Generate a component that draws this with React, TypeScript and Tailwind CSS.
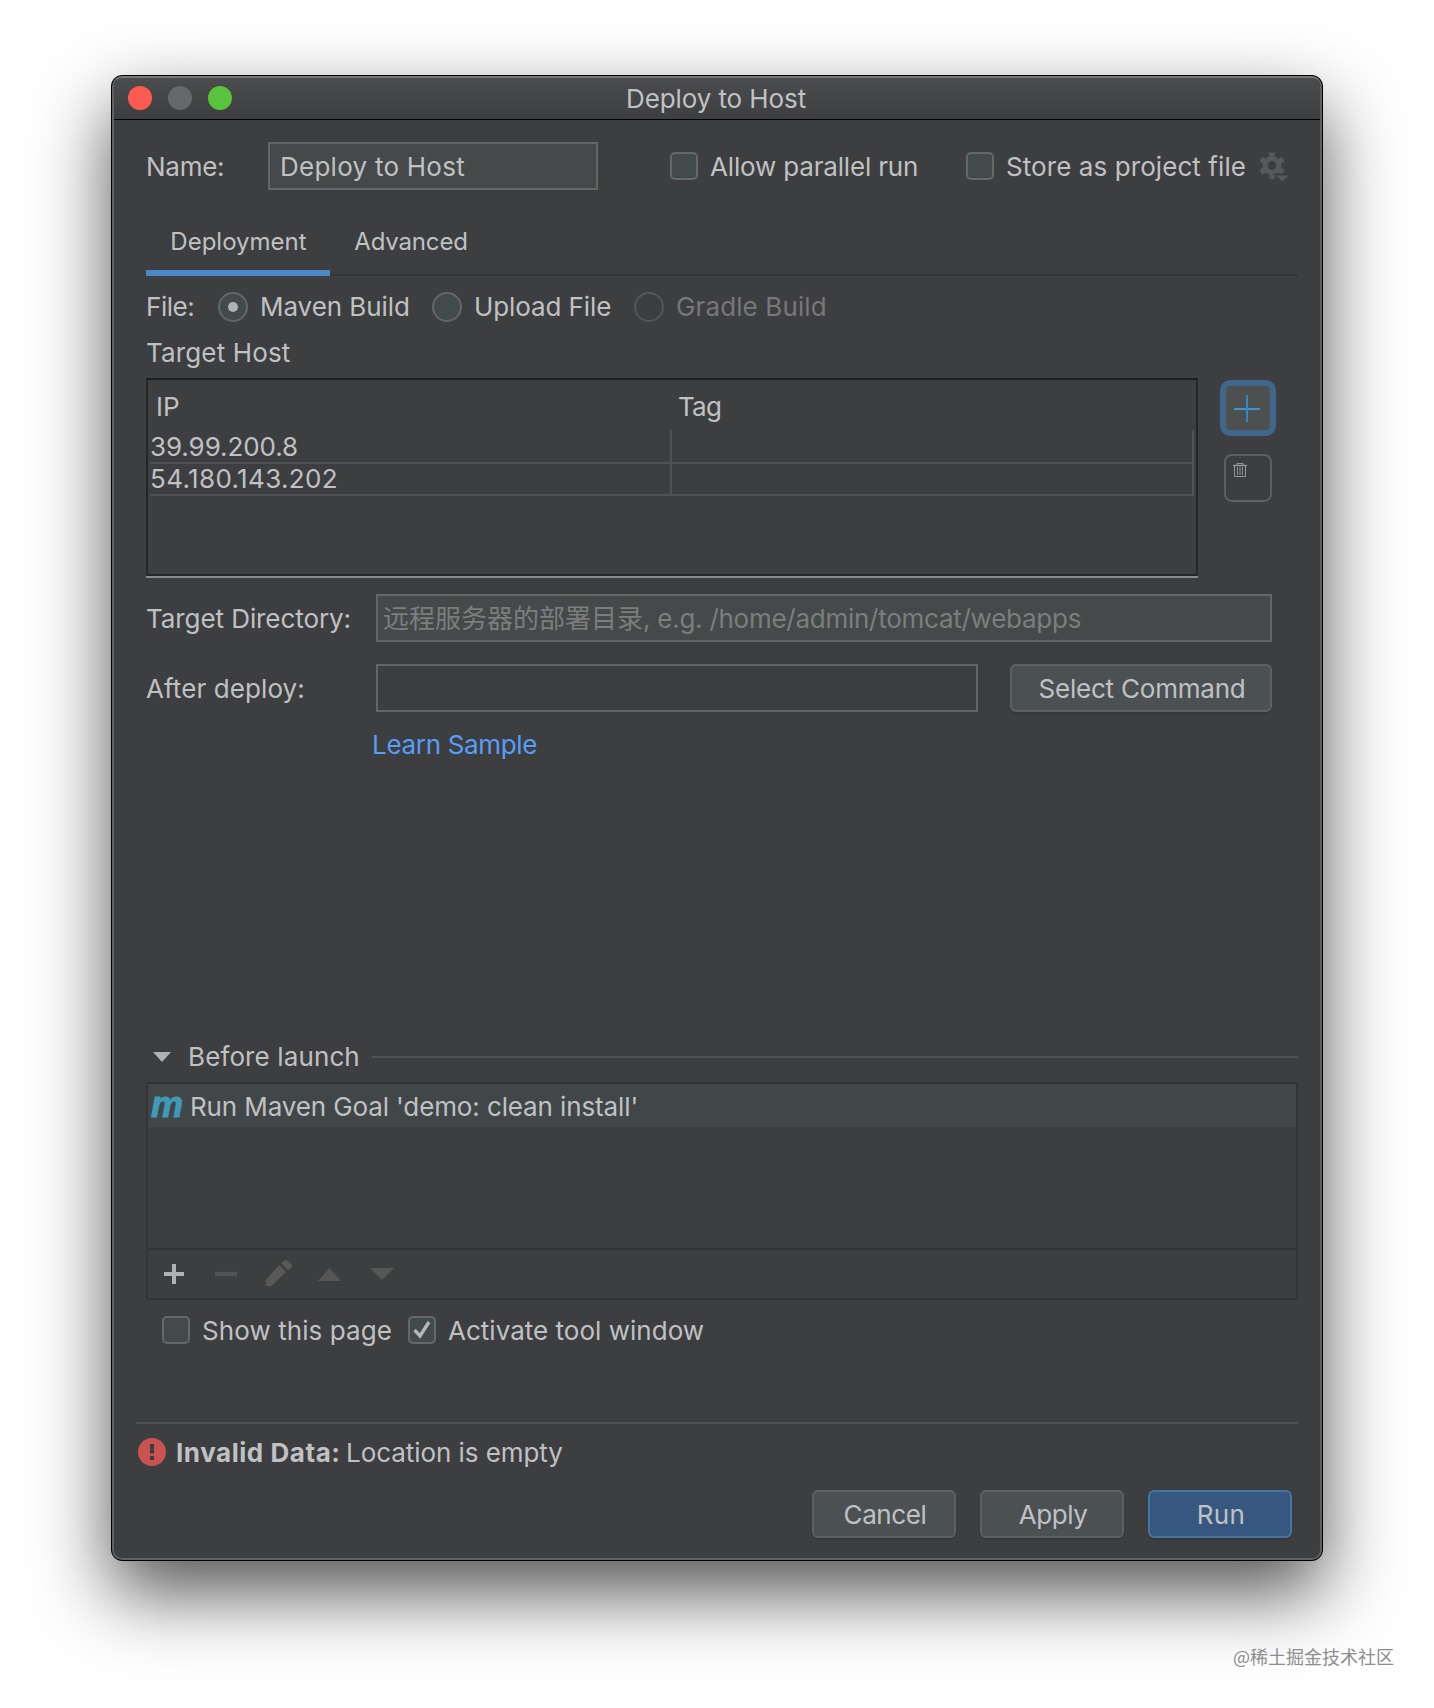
import React from 'react'
import clsx from 'clsx'
import { twMerge } from 'tailwind-merge'

interface TextProps {
  children: React.ReactNode
  className?: string
}

const Text: React.FC<TextProps> = ({ children, className }) => (
  <span className={twMerge('mt-px block whitespace-pre leading-[31px]', className)}>{children}</span>
)

const Checkbox: React.FC<{ checked?: boolean }> = ({ checked }) => (
  <div className="h-7 w-7 shrink-0 rounded-[5px] border-2 border-[#646868] bg-[#434a4b]">
    {checked && (
      <svg viewBox="0 0 24 24" className="h-6 w-6" fill="none">
        <path d="M4.5 12 L10 18 L19 4" stroke="#b4b6b7" strokeWidth="3.4" />
      </svg>
    )}
  </div>
)

const Radio: React.FC<{ selected?: boolean; disabled?: boolean }> = ({ selected, disabled }) => (
  <div
    className={clsx(
      'flex h-[30px] w-[30px] shrink-0 items-center justify-center rounded-full border-2',
      disabled ? 'border-[#535556]' : 'border-[#636767] bg-[#434a4b]'
    )}
  >
    {selected && <div className="h-2.5 w-2.5 rounded-full bg-[#b0b2b3]" />}
  </div>
)

interface ButtonProps {
  label: string
  className?: string
  textClassName?: string
  primary?: boolean
}

const Button: React.FC<ButtonProps> = ({ label, className, textClassName, primary }) => (
  <button
    className={clsx(
      'flex h-12 items-center justify-center rounded-md border-2 pl-0.5 shadow-[0_2px_2px_rgba(0,0,0,0.12)]',
      primary ? 'border-[#46759f] bg-[#365880]' : 'border-[#5d6162] bg-[#4b5152]',
      className
    )}
  >
    <Text className={textClassName}>{label}</Text>
  </button>
)

const GearIcon = () => (
  <svg width="30" height="32" viewBox="0 0 30 32" className="mt-px shrink-0">
    <g fill="#57595a">
      {[0, 60, 120, 180, 240, 300].map(angle => (
        <rect key={angle} x="9.2" y="1.6" width="5.6" height="8" transform={`rotate(${angle} 12 14.7)`} />
      ))}
      <circle cx="12" cy="14.7" r="9.4" />
    </g>
    <circle cx="12" cy="14.7" r="4.4" fill="#3d3e40" />
    <path d="M12.5 22.5 H30 L22 32 Z" fill="#3d3e40" />
    <path d="M16 24.6 H28.4 L22.2 30.6 Z" fill="#57595a" />
  </svg>
)

const TrashIcon = () => (
  <svg width="14" height="15" viewBox="0 0 14 15" fill="none" stroke="#97999a">
    <path d="M4 2 V0.5 H10 V2" />
    <path d="M0 2.5 H14" strokeWidth="1.4" />
    <path d="M1.5 3 V13.5 H12.5 V3" />
    <path d="M4.5 4 V12 M7 4 V12 M9.5 4 V12" strokeWidth="0.9" />
  </svg>
)

const hosts = [
  { ip: '39.99.200.8', tag: '', row: 'h-[34px]', text: 'tracking-[-0.08px]' },
  { ip: '54.180.143.202', tag: '', row: 'h-8', text: '-mt-px tracking-[0.35px]' }
]

const TitleBar = () => (
  <div className="flex h-[42px] items-start border-b border-black bg-linear-to-b from-[#4b4c4e] to-[#3d3e40]">
    <div className="mt-2 ml-3.5 flex w-[500px] gap-4">
      <div className="h-6 w-6 rounded-full bg-[#ff5b52]" />
      <div className="h-6 w-6 rounded-full bg-[#67686b]" />
      <div className="h-6 w-6 rounded-full bg-[#59c43c]" />
    </div>
    <Text className="mt-[5px] -ml-0.5 tracking-[-0.1px]">Deploy to Host</Text>
  </div>
)

const HostTable = () => (
  <div className="flex h-[200px] w-[1052px] flex-col border-b-2 border-[#8b8c8d]">
    <div className="flex-1 border-2 border-t-[#1d1e20] border-r-[#252628] border-b-[#252628] border-l-[#252628]">
      <div className="flex h-[50px] pt-2.5">
        <Text className="ml-2 w-[522px]">IP</Text>
        <Text className="tracking-[-0.8px]">Tag</Text>
      </div>
      <div className="mx-0.5">
        {hosts.map(host => (
          <div key={host.ip} className={clsx('flex border-b-2 border-[#515254]', host.row)}>
            <div className="w-[522px] border-r-2 border-[#515254]">
              <Text className={host.text}>{host.ip}</Text>
            </div>
            <div className="w-[522px] border-r-2 border-[#515254]">{host.tag}</div>
          </div>
        ))}
      </div>
    </div>
  </div>
)

const BeforeLaunch = () => (
  <>
    <div className="mt-[280px] flex h-8 items-center">
      <svg width="18" height="10" viewBox="0 0 18 10" className="mt-0.5 ml-[7px]">
        <path d="M0 0 H18 L9 10 Z" fill="#afb1b3" />
      </svg>
      <Text className="ml-[17px] w-[184px] tracking-[0.12px]">Before launch</Text>
      <div className="mt-0.5 h-0.5 flex-1 bg-[#515254]" />
    </div>
    <div className="mt-2.5 border-2 border-[#333436]">
      <div className="h-[164px]">
        <div className="flex h-[43px] items-start bg-[#414748]">
          <span className="ml-[3px] block w-[39px] font-['Liberation_Sans'] text-[36px] leading-[42px] font-bold text-[#3f9ab8] italic [-webkit-text-stroke:1px_#3f9ab8]">
            m
          </span>
          <Text className="mt-[7px] tracking-[-0.12px]">Run Maven Goal 'demo: clean install'</Text>
        </div>
      </div>
      <div className="flex h-[50px] items-center border-t-2 border-[#333436] pl-4">
        <svg width="20" height="20" viewBox="0 0 20 20">
          <path d="M10 0 V20 M0 10 H20" stroke="#afb1b3" strokeWidth="4" />
        </svg>
        <svg width="22" height="20" viewBox="0 0 22 20" className="ml-[31px]">
          <path d="M0 10 H22" stroke="#525354" strokeWidth="4.4" />
        </svg>
        <svg width="30" height="32" viewBox="0 0 30 32" className="ml-[27px]" fill="#585957">
          <path d="M1.7 21.7 L15.3 7 L22 13.7 L7.7 28 H1.7 Z" />
          <path d="M17.2 5.2 L20 2.6 Q21.8 1.2 23.6 2.6 L27.6 6.4 Q29 8 27.6 9.5 L24.2 12.2 Z" />
        </svg>
        <svg width="23" height="13" viewBox="0 0 23 13" className="ml-6">
          <path d="M0 13 L11.5 0 L23 13 Z" fill="#555655" />
        </svg>
        <svg width="24" height="12" viewBox="0 0 24 12" className="ml-[29px]">
          <path d="M0 0 H24 L12 12 Z" fill="#565757" />
        </svg>
      </div>
    </div>
    <div className="mt-4 ml-4 flex h-7 items-center">
      <Checkbox />
      <Text className="ml-3 w-[206px] tracking-[0.08px]">Show this page</Text>
      <Checkbox checked />
      <Text className="ml-3 tracking-[0.02px]">Activate tool window</Text>
    </div>
  </>
)

const App: React.FC = () => {
  return (
    <div className="h-[1708px] w-[1434px] overflow-hidden bg-white pt-[75px] font-[Inter,'Noto_Sans_CJK_SC',sans-serif] text-[26px] text-[#c0c1c2]">
      {/* Dialog window */}
      <div className="ml-[111px] h-[1486px] w-[1212px] rounded-[11px] border border-black bg-black shadow-[0_32px_76px_rgba(0,0,0,0.675)]">
        <div className="h-full overflow-hidden rounded-[10px] border-2 border-[#5e6061] border-t-[#777878] bg-[#3d3e40]">
          <TitleBar />

          <div className="pr-[22px] pl-8">
            {/* Name and run options */}
            <div className="mt-[22px] flex h-12 items-center">
              <Text className="w-[122px] tracking-[-0.25px]">Name:</Text>
              <div className="flex h-12 w-[330px] items-center border-2 border-[#646666] bg-[#45494a] pl-2.5">
                <Text className="tracking-[0.25px]">Deploy to Host</Text>
              </div>
              <div className="ml-[72px] flex w-[296px] items-center">
                <Checkbox />
                <Text className="ml-3 tracking-[-0.17px]">Allow parallel run</Text>
              </div>
              <Checkbox />
              <Text className="ml-3 w-[254px] tracking-[0.08px]">Store as project file</Text>
              <GearIcon />
            </div>

            {/* Tabs */}
            <div className="mt-5 flex h-[66px] border-b-2 border-[#343537] text-2xl">
              <div className="flex h-[66px] w-[184px] justify-center border-b-[6px] border-[#4a88c7] pt-4 pl-px">
                <Text className="leading-[29px]">Deployment</Text>
              </div>
              <div className="flex w-[162px] justify-center pt-4">
                <Text className="leading-[29px] tracking-[-0.16px]">Advanced</Text>
              </div>
            </div>

            {/* Source of the file */}
            <div className="mt-4 flex h-[30px] items-center">
              <Text className="-mt-px w-[72px] tracking-[-0.45px]">File:</Text>
              <Radio selected />
              <Text className="-mt-px ml-3 w-[172px] tracking-[-0.06px]">Maven Build</Text>
              <Radio />
              <Text className="-mt-px ml-3 w-40 tracking-[-0.1px]">Upload File</Text>
              <Radio disabled />
              <Text className="-mt-px ml-3 tracking-[0.12px] text-[#777879]">Gradle Build</Text>
            </div>

            <Text className="mt-[15px] tracking-[0.14px]">Target Host</Text>
            <div className="mt-2.5 flex h-[200px]">
              <HostTable />
              <div className="ml-[22px] flex w-14 flex-col items-center pt-0.5">
                <button className="flex h-14 w-14 items-center justify-center rounded-[10px] border-[6px] border-[#41668c] bg-[#4d504f]">
                  <svg width="28" height="28" viewBox="0 0 28 28" fill="none" strokeWidth="2">
                    <path d="M0 15 H26" stroke="#3a96cf" />
                    <path d="M13 1 V28" stroke="#2a8cc6" />
                  </svg>
                </button>
                <button className="mt-[18px] flex h-12 w-12 items-start rounded-lg border-2 border-[#5e5f60] pt-[7px] pl-[7px]">
                  <TrashIcon />
                </button>
              </div>
            </div>

            <div className="mt-4 flex h-12 items-center">
              <Text className="w-[230px] tracking-[-0.08px]">Target Directory:</Text>
              <div className="flex h-12 w-[896px] items-center border-2 border-[#646666] bg-[#45494a] pl-[5px] text-[#7c7e7d]">
                <Text>远程服务器的部署目录</Text>
                <Text className="tracking-[-0.26px]">, e.g. /home/admin/tomcat/webapps</Text>
              </div>
            </div>

            <div className="mt-[22px] flex h-12 items-center">
              <Text className="w-[230px] tracking-[0.09px]">After deploy:</Text>
              <div className="h-12 w-[602px] border-2 border-[#646666]" />
              <Button label="Select Command" className="ml-8 w-[262px]" textClassName="tracking-[-0.21px]" />
            </div>
            <a className="block text-[#589df6]">
              <Text className="ml-[226px] pt-4 tracking-[-0.32px]">Learn Sample</Text>
            </a>

            <BeforeLaunch />

            {/* Validation message and actions */}
            <div className="mt-[78px] -ml-2.5 h-0.5 bg-[#515254]" />
            <div className="mt-3.5 -ml-2 flex h-7 items-center">
              <svg width="28" height="28" viewBox="0 0 28 28">
                <circle cx="14" cy="14" r="14" fill="#c75450" />
                <path d="M14 6 V15.5 M14 18 V22" stroke="#3d3e40" strokeWidth="4" />
              </svg>
              <Text className="ml-2.5 w-[170px] font-bold tracking-[0.55px]">Invalid Data:</Text>
              <Text className="tracking-[-0.06px]">Location is empty</Text>
            </div>
            <div className="mt-6 mr-1.5 flex justify-end gap-6">
              <Button label="Cancel" className="w-36" textClassName="tracking-[-0.39px]" />
              <Button label="Apply" className="w-36" textClassName="tracking-[-0.43px]" />
              <Button label="Run" className="w-36" textClassName="tracking-[0.3px]" primary />
            </div>
          </div>
        </div>
      </div>

      <div className="mt-[85px] mr-10 text-right font-['Noto_Sans_CJK_SC',sans-serif] text-[18px] leading-5 text-[#8d8d8d]">
        @稀土掘金技术社区
      </div>
    </div>
  )
}

export default App
